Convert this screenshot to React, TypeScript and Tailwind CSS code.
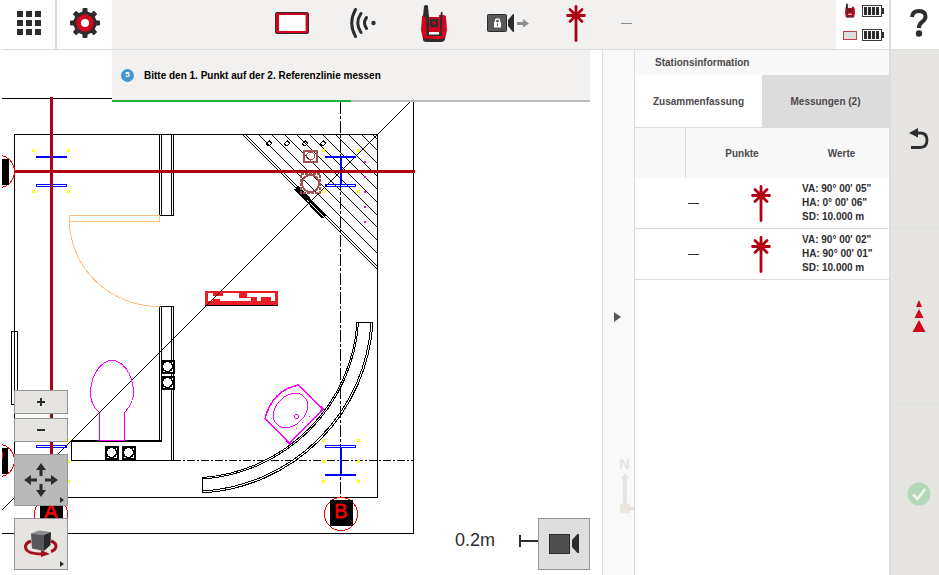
import type { ReactNode } from 'react';

interface Measurement {
  id: number;
  va: string;
  ha: string;
  sd: string;
}

const measurements: Measurement[] = [
  { id: 1, va: `90° 00' 05"`, ha: `0° 00' 06"`, sd: '10.000 m' },
  { id: 2, va: `90° 00' 02"`, ha: `90° 00' 01"`, sd: '10.000 m' },
];

function GridIcon() {
  return (
    <svg width="24" height="24" viewBox="0 0 24 24" fill="#2d2d2f">
      {[0, 9, 18].map((y) => [0, 9, 18].map((x) => <rect key={`${x}-${y}`} x={x} y={y} width="6" height="6" />))}
    </svg>
  );
}

function GearIcon() {
  return (
    <svg width="32" height="32" viewBox="-16 -16 32 32">
      <g fill="#2d2d2f">
        <circle r="11.5" />
        {[0, 45, 90, 135, 180, 225, 270, 315].map((a) => (
          <path key={a} transform={`rotate(${a})`} d="M-4 -9 L-2.5 -12 V-14 Q-2.5 -15 -1.5 -15 H1.5 Q2.5 -15 2.5 -14 V-12 L4 -9 Z" />
        ))}
      </g>
      <circle r="8.8" fill="#d2051e" />
      <circle r="4" fill="#fff" />
    </svg>
  );
}

function TabletIcon() {
  return (
    <svg width="34" height="22" viewBox="0 0 34 22">
      <rect x="0.5" y="0.5" width="33" height="21" rx="1.5" fill="#d2051e" stroke="#2d2d2f" />
      <rect x="4" y="3" width="26" height="16" fill="#fff" />
      <path d="M30.5 3 V19" stroke="#e9a0a8" />
    </svg>
  );
}

function SignalIcon() {
  return (
    <svg width="26" height="30" viewBox="0 0 26 30" fill="none" stroke="#2d2d2f" strokeWidth="3" strokeLinecap="round">
      <path d="M5.5 1.5 Q-2 15 5.5 28.5" />
      <path d="M11 5.5 Q4.5 15 11 24.5" />
      <path d="M16.5 9.5 Q12.5 15 16.5 20.5" />
      <circle cx="23.5" cy="15" r="2.2" fill="#2d2d2f" stroke="none" />
    </svg>
  );
}

function StationIcon({ className = 'h-[37px] w-[26px]' }: { className?: string }) {
  return (
    <svg className={className} viewBox="0 0 26 37">
      <path d="M1 12 Q1 10 4 10 H22 Q25 10 25 12 L26 25 L24 34 Q24 36 21 36 H5 Q2 36 2 34 L0 25 Z" fill="#d2051e" />
      <path d="M2 32 L5 34 H21 L24 32 L23 36 Q22 37 20 37 H6 Q3 37 2.5 36 Z" fill="#2d2d2f" />
      <path d="M3 1 Q5 -1 7 1 L8 13 V29 H19 V13 L20 7 H21.5 V10 L20.5 31 H6 L5 13 L2 11 Z" fill="#2d2d2f" />
      <path d="M8 0 H18 V12 H8 Z" fill="#f3f1ef" />
      <rect x="8" y="12" width="10.5" height="14" fill="#d2051e" />
      <rect x="9" y="14" width="8" height="8" fill="#2d2d2f" />
      <circle cx="13" cy="18" r="1.8" fill="#d2051e" />
      <rect x="8" y="27" width="10" height="2.5" fill="#fff" />
    </svg>
  );
}

function LockedCameraIcon() {
  return (
    <svg width="49" height="20" viewBox="0 0 49 20">
      <rect x="7.5" y="1.5" width="19" height="17" rx="1" fill="#58575a" stroke="#2d2d2f" />
      <path d="M34 1 V19 H33 L28 13 V7 L33 1 Z" fill="#2d2d2f" />
      <rect x="14" y="9" width="7" height="5.5" fill="#fff" />
      <path d="M15.5 9 V7.5 Q15.5 6 17.5 6 Q19.5 6 19.5 7.5 V9" fill="none" stroke="#fff" strokeWidth="1.3" />
      <path d="M17.5 10.5 V13" stroke="#58575a" />
      <path d="M37 9 H43 V6 L49 10.5 L43 14.5 V12 H37 Z" fill="#8f8f8f" />
    </svg>
  );
}

function LaserPointIcon() {
  return (
    <svg width="20" height="37" viewBox="0 0 20 37" fill="none" stroke="#b00014" strokeWidth="2.8" strokeLinecap="round">
      <path d="M10 1.5 V35.5 M1.5 10.5 H18.5 M4 4.5 L16 16.5 M16 4.5 L4 16.5" />
      <circle cx="10" cy="10.5" r="4" fill="#b00014" stroke="none" />
    </svg>
  );
}

function BatteryIcon() {
  return (
    <svg width="22" height="12" viewBox="0 0 22 12">
      <rect x="0.5" y="0.5" width="19" height="11" fill="#fff" stroke="#3c3c3e" />
      <rect x="20" y="3" width="2" height="6" fill="#2d2d2f" />
      {[2, 6, 10, 14].map((x) => (
        <rect key={x} x={x} y="2" width="3" height="8" fill="#2d2d2f" />
      ))}
    </svg>
  );
}

function HelpIcon() {
  return (
    <svg width="18" height="28" viewBox="0 0 18 28">
      <path d="M2 8 Q2.5 2 9 2 Q15.5 2 15.5 7.5 Q15.5 10.5 12 13 Q9 15 9 19" fill="none" stroke="#2d2d2f" strokeWidth="4" />
      <circle cx="9" cy="24.5" r="3.2" fill="#2d2d2f" />
    </svg>
  );
}

function CameraIcon() {
  return (
    <svg width="30" height="20" viewBox="0 0 30 20">
      <rect x="0.5" y="0.5" width="20" height="19" fill="#504e50" stroke="#2d2d2f" />
      <path d="M30 0 V19 H28.5 L23 13 V6 L28.500 0 Z" fill="#2d2d2f" />
    </svg>
  );
}

function MoveIcon() {
  return (
    <svg width="34" height="34" viewBox="-17 -17 34 34" fill="#2d2d2f">
      {[0, 90, 180, 270].map((a) => (
        <path key={a} transform={`rotate(${a})`} d="M0 -17 L5 -10 H1.5 V-4 H-1.5 V-10 H-5 Z" />
      ))}
    </svg>
  );
}

function RotateIcon() {
  return (
    <svg width="34" height="28" viewBox="0 0 34 28">
      <path d="M7 11 Q1.5 13 1.5 17 Q2 24 18 24" fill="none" stroke="#a50f1e" strokeWidth="3" />
      <path d="M27 11 Q32 13 32 16 Q32 20 27 21.5" fill="none" stroke="#a50f1e" strokeWidth="3" />
      <path d="M17 20 L26 24 L17 27 Z" fill="#a50f1e" />
      <path d="M7 3.5 L15 0.5 L27 2 L20 5 Z" fill="#8c8c90" />
      <path d="M7 3.5 L20 5 V21 L8 18.5 Z" fill="#58575a" />
      <path d="M20 5 L27 2 L26.5 15 L20 21 Z" fill="#29292b" />
    </svg>
  );
}

function Dots({ points, color }: { points: number[][]; color: string }) {
  return (
    <g fill="none" stroke={color}>
      {points.map(([x, y]) => (
        <rect key={`${x}-${y}`} x={x - 0.5} y={y - 0.5} width="2" height="2" />
      ))}
    </g>
  );
}

function Socket({ x, y }: { x: number; y: number }) {
  return (
    <g transform={`translate(${x} ${y})`}>
      <rect x="0.5" y="0.5" width="12" height="12" fill="#fff" stroke="#000" strokeWidth="2" />
      <circle cx="6.5" cy="6.5" r="5" fill="#fff" stroke="#000" strokeWidth="1.5" />
    </g>
  );
}

function FloorPlan() {
  return (
    <svg
      className="absolute top-0 left-[2px]"
      width="413"
      height="525"
      viewBox="2 50 413 525"
      shapeRendering="crispEdges"
      fill="none"
      stroke="#000"
      strokeWidth="1"
      role="img"
      aria-label="Grundriss"
    >
      {/* walls */}
      <path d="M2 98.5 H413.5 V533.5 H2 M14.5 134.5 H377.5 V497.5 H14.5 Z" />
      <rect x="11.5" y="331.5" width="6" height="73" />
      <path d="M159.5 134 V215.5 H173.5 V134 M161.5 134 V215 M171.5 134 V215" />
      <path d="M159.5 441 V306.5 H173.5 V460.5 M161.5 306 V441 M171.5 306 V460" />
      <path d="M71 441 H161.5" strokeWidth="2" />
      <path d="M71.5 441 V460.5 H173" />
      <path d="M173 460.5 H413" strokeDasharray="8 2 2 2" />
      <path d="M340.5 102 V497" strokeDasharray="12 2 3 2" />
      <path d="M410 102 L2 510" />

      {/* hatched corner */}
      <path d="M243 135 L377 269 M246 135 L377 266" />
      {[259, 272, 285, 297, 310, 323, 336, 349, 362, 373].map((x) => (
        <line key={x} x1={x} y1="135" x2="377" y2={512 - x} />
      ))}
      <path d="M297 187 L309 199" strokeWidth="4" />
      <path d="M309 199 L325 216" strokeWidth="2" />
      <path d="M295 189 L323 218" strokeWidth="2" />
      {[269, 287, 305, 323].map((x) => (
        <path key={x} d={`M${x - 3} 144 L${x} 141 L${x + 3} 143 L${x} 146 Z M${x} 140 V142`} />
      ))}
      <g stroke="#a0524e">
        <rect x="304" y="151" width="13" height="11" strokeWidth="2" />
        <circle cx="310.5" cy="156" r="4" />
        <rect x="301" y="174" width="19" height="19" strokeWidth="2" strokeDasharray="3 1" />
        <circle cx="310.5" cy="183.5" r="8.5" strokeWidth="2" />
      </g>

      {/* door */}
      <g stroke="#ffbf7f">
        <rect x="69.5" y="215.5" width="90" height="6" />
        <path d="M69.5 221 A90 86 0 0 0 160 306.5" />
      </g>

      {/* sanitary objects */}
      <g stroke="#f0f">
        <path d="M99.5 412.5 V440.5 H124.5 V412.5 C131 406 134 400 133.5 390 C132 372 122 360.5 112 360.5 C101 360.5 92 374 90.5 390 C90 400 94 408 99.5 412.5" />
        <path d="M265 418.5 Q272.5 390 298.5 385 L323 409 L289.5 443.5 Z" strokeWidth="1.5" />
        <ellipse cx="290.5" cy="410.5" rx="19.5" ry="14.5" transform="rotate(-45 290.5 410.5)" />
        <circle cx="296.5" cy="416.5" r="2" />
        <path d="M302 422.5 H303 M309 416.5 H310 M296 428.5 H297" />
      </g>
      <Socket x={161} y={360} />
      <Socket x={161} y={376} />
      <Socket x={105} y={446} />
      <Socket x={122} y={446} />

      {/* curved wall */}
      <path d="M357 322.5 H373 A182 182 0 0 1 202.5 493 V477.5 A167 167 0 0 0 357 322.5" />
      <path d="M371 323 A180 180 0 0 1 203 491 M358.5 323 A168 168 0 0 1 203 479" />

      {/* columns */}
      <g stroke="#00f">
        <path d="M36 157 H67 M325 157 H356 M341 157 V184 M341 448 V475 M325 475 H356" strokeWidth="2" />
        <rect x="36.5" y="184.5" width="30" height="2" />
        <rect x="325.5" y="184.5" width="30" height="2" />
        <rect x="36.5" y="445.5" width="30" height="2" />
        <rect x="325.5" y="445.5" width="30" height="2" />
      </g>
      <Dots
        color="#ff0"
        points={[
          [33, 150], [68, 150], [33, 191], [68, 191], [323, 150], [358, 150], [323, 191], [358, 191],
          [323, 440], [358, 440], [323, 461], [358, 461], [323, 481], [358, 481], [68, 440], [68, 461], [68, 481],
        ]}
      />
      {[162, 177, 192, 207, 222].map((y) => (
        <rect key={y} x="364" y={y - 1} width="2" height="2" fill="#f0f" stroke="none" />
      ))}

      {/* axis heads */}
      <g stroke="#f00">
        <circle cx="-2" cy="171.5" r="16.5" />
        <circle cx="-2" cy="460.5" r="16.5" />
        <circle cx="51" cy="514" r="16.5" />
        <circle cx="341" cy="514" r="16.5" />
      </g>
      <g fill="#000" stroke="none">
        <rect x="2" y="159" width="7" height="26" />
        <rect x="2" y="448" width="6" height="26" />
        <rect x="40" y="500" width="23" height="26" />
        <rect x="330" y="500" width="23" height="26" />
      </g>
      <path d="M2.5 452 V459" stroke="#f00" />
      <g className="font-['Liberation_Sans'] text-[20px]" fill="#f00" stroke="#f00" strokeWidth="0.5" textAnchor="middle">
        <text x="51" y="518">A</text>
        <text x="341" y="518">B</text>
      </g>

      {/* manufacturer mark */}
      <rect x="205" y="291" width="73" height="14" fill="#ed1c24" stroke="none" />
      <path d="M205 305.5 H278" />
      <g fill="#fff" stroke="none">
        <rect x="208" y="293" width="5" height="8" />
        <rect x="213" y="296" width="10" height="3" />
        <rect x="223" y="293" width="16" height="5" />
        <rect x="220" y="298" width="31" height="3" />
        <rect x="247" y="293" width="28" height="4" />
        <rect x="257" y="297" width="4" height="4" />
        <rect x="271" y="297" width="4" height="4" />
      </g>
      <path d="M222 290 L205 307" />

      {/* reference lines */}
      <path d="M14 171.5 H415 M51.5 97 V470" stroke="#b00014" strokeWidth="3" />
    </svg>
  );
}

function ToolButton({ label, className, menu, children }: { label: string; className: string; menu?: boolean; children: ReactNode }) {
  return (
    <button aria-label={label} className={`relative flex w-[54px] items-center justify-center border border-[#969696] ${className}`}>
      {children}
      {menu && (
        <svg className="absolute right-[3px] bottom-[2px]" width="4" height="6" viewBox="0 0 4 6">
          <path d="M0 0 L4 3 L0 6 Z" fill="#2d2d2f" />
        </svg>
      )}
    </button>
  );
}

function Header() {
  return (
    <header className="ml-[2px] flex h-[50px] shrink-0 border-b border-[#dcdcdc]">
      <button aria-label="Menü" className="flex w-[55px] items-center justify-center border-r-2 border-[#dcdcdc] pb-[3px]">
        <GridIcon />
      </button>
      <button aria-label="Einstellungen" className="flex w-[55px] items-center justify-center pb-[3px]">
        <GearIcon />
      </button>
      <div className="flex flex-1 items-center bg-[#f3f1ef] pb-[3px] pl-[144px]">
        <div className="flex w-[71px] justify-center"><TabletIcon /></div>
        <div className="flex w-[71px] justify-center"><SignalIcon /></div>
        <div className="flex w-[71px] justify-center"><StationIcon /></div>
        <div className="flex w-[71px] justify-center"><LockedCameraIcon /></div>
        <div className="flex w-[71px] justify-center"><LaserPointIcon /></div>
        <div className="flex w-[30px] justify-center"><span className="h-px w-[11px] bg-[#8a8a8a]" /></div>
      </div>
      <div className="grid w-[53px] grid-cols-[16px_22px] content-start items-center justify-center justify-items-center gap-x-1 gap-y-[11px] pt-[3px]">
        <StationIcon className="h-[15px] w-[10px]" />
        <BatteryIcon />
        <svg width="14" height="9" viewBox="0 0 14 9">
          <rect x="0.5" y="0.5" width="13" height="8" fill="#ddd" stroke="#c83c4b" />
        </svg>
        <BatteryIcon />
      </div>
      <button aria-label="Hilfe" className="flex w-[50px] items-center justify-center border-l-2 border-[#dcdcdc] pb-[3px] pl-2">
        <HelpIcon />
      </button>
    </header>
  );
}

function Canvas() {
  return (
    <main className="relative min-w-0 flex-1 overflow-hidden bg-white">
      <FloorPlan />

      <div className="absolute top-0 right-3 left-28 bg-[#f3f1ef]">
        <div className="flex h-[50px] items-center gap-2.5 pl-[9px]">
          <span className="flex size-[13px] items-center justify-center rounded-full bg-[#4398cf] text-[8px] font-bold text-white">5</span>
          <p className="font-bold text-black">Bitte den 1. Punkt auf der 2. Referenzlinie messen</p>
        </div>
        <div className="h-[2px] bg-[#bababa]">
          <div className="h-full w-1/2 bg-[#1bb13c]" />
        </div>
      </div>

      <div className="absolute bottom-[5px] left-[14px] flex flex-col gap-3">
        <div className="flex flex-col gap-1">
          <ToolButton label="Vergrößern" className="h-6 bg-[#e6e4e0]">
            <svg width="8" height="8" viewBox="0 0 8 8"><path d="M0 4 H8 M4 0 V8" stroke="#2d2d2f" strokeWidth="2" /></svg>
          </ToolButton>
          <ToolButton label="Verkleinern" className="h-6 bg-[#e6e4e0]">
            <svg width="8" height="8" viewBox="0 0 8 8"><path d="M0 4 H8" stroke="#2d2d2f" strokeWidth="2" /></svg>
          </ToolButton>
        </div>
        <ToolButton label="Verschieben" className="h-[52px] bg-[#b9b9b9]" menu>
          <MoveIcon />
        </ToolButton>
        <ToolButton label="Drehen" className="h-[52px] bg-[#e6e4e0]" menu>
          <RotateIcon />
        </ToolButton>
      </div>

      <div className="absolute right-3 bottom-[5px] flex items-center">
        <span className="mr-6 pb-2 text-[18px] leading-none text-[#2d2d2f]">0.2m</span>
        <svg className="mb-[7px]" width="19" height="12" viewBox="0 0 19 12" shapeRendering="crispEdges">
          <path d="M1 0 V12 M1 6 H19" stroke="#2d2d2f" strokeWidth="2" />
        </svg>
        <button aria-label="Kamera" className="flex size-[52px] items-center justify-center border border-[#969696] bg-[#dedede]">
          <CameraIcon />
        </button>
      </div>
    </main>
  );
}

function Splitter() {
  return (
    <div className="relative flex w-[33px] shrink-0 items-center justify-center border-x border-[#dcdcdc] bg-[#f9f9f9]">
      <button aria-label="Seitenleiste einklappen" className="mt-[9px] -ml-[2px]">
        <svg width="7" height="10" viewBox="0 0 7 10"><path d="M0 0 L7 5 L0 10 Z" fill="#5a5a5c" /></svg>
      </button>
      <div className="absolute right-0 bottom-[60px] flex w-[15px] flex-col items-start text-[#e3e4ec]">
        <span className="text-[15px] leading-[19px] font-bold">N</span>
        <svg width="15" height="42" viewBox="0 0 15 42">
          <path d="M6 0 L10 6 H8 V31 H4 V6 H2 Z" fill="#e3e4ec" />
          <path d="M1 30 L3 31 H9 L11 30 V41 L9 40 H3 L1 41 Z" fill="#ebe6de" />
          <path d="M11 35.5 H15" stroke="#f0d9dc" strokeWidth="3" />
        </svg>
      </div>
    </div>
  );
}

function StationPanel() {
  return (
    <aside className="w-[254px] shrink-0 bg-white text-[#4c4a4c]">
      <h2 className="bg-[#f8f8f8] pl-5 leading-[25px] font-bold">Stationsinformation</h2>
      <div className="flex h-[53px] border-b border-[#dcdcdc]" role="tablist">
        <button role="tab" aria-selected="false" className="flex-1 font-bold">Zusammenfassung</button>
        <button role="tab" aria-selected="true" className="flex-1 bg-[#dcdcdc] font-bold">Messungen (2)</button>
      </div>
      <table className="w-full table-fixed border-separate border-spacing-0 text-left">
        <thead className="bg-[#f8f8f8]">
          <tr className="h-[50px]">
            <td className="w-[51px] border-r border-[#dcdcdc]" />
            <th className="w-[112px] p-0 text-center">Punkte</th>
            <th className="p-0 pr-1 text-center">Werte</th>
          </tr>
        </thead>
        <tbody className="text-[#2d2d2f]">
          {measurements.map((m) => (
            <tr key={m.id} className="h-[51px]">
              <td className="border-b border-[#dcdcdc]" />
              <td className="border-b border-[#dcdcdc] p-0">
                <div className="flex items-center gap-[52px] pl-0.5">
                  <span className="h-px w-[11px] bg-[#2d2d2f]" />
                  <LaserPointIcon />
                </div>
              </td>
              <td className="border-b border-[#dcdcdc] p-0 pl-1 leading-[14px] font-bold">
                <div>VA: {m.va}</div>
                <div>HA: {m.ha}</div>
                <div>SD: {m.sd}</div>
              </td>
            </tr>
          ))}
        </tbody>
      </table>
    </aside>
  );
}

function ActionBar() {
  return (
    <nav className="w-[50px] shrink-0 border-l-2 border-[#dcdcdc] bg-[#e6e4e0]">
      <button aria-label="Zurück" className="flex h-[178px] w-full items-center justify-center border-b border-[#dedede] pl-2">
        <svg width="20" height="22" viewBox="0 0 20 22">
          <path d="M7 5 H11 Q18 5 18 12 Q18 19.5 11 19.5 H2" fill="none" stroke="#2d2d2f" strokeWidth="2.8" />
          <path d="M0 5 L9 0 V9.5 Z" fill="#2d2d2f" />
        </svg>
      </button>
      <button aria-label="Messen" className="flex h-[177px] w-full items-center justify-center border-b border-[#dedede] pl-2">
        <svg width="14" height="32" viewBox="0 0 14 32" fill="#d2051e">
          <path d="M7 0 L10 7 H4 Z M7 9 L11.5 18 H2.5 Z M7 20 L13.5 32 H0.5 Z" />
        </svg>
      </button>
      <button aria-label="Bestätigen" className="flex h-[177px] w-full items-center justify-center pl-2">
        <svg width="24" height="24" viewBox="0 0 24 24">
          <circle cx="12" cy="12" r="11.5" fill="#b4d7b8" />
          <path d="M6 12.5 L10.5 17 L18 7" fill="none" stroke="#f3f4ef" strokeWidth="2.5" />
        </svg>
      </button>
    </nav>
  );
}

export default function App() {
  return (
    <div className="flex h-screen flex-col overflow-hidden bg-white font-['Liberation_Sans',sans-serif] text-[10px]">
      <Header />
      <div className="flex min-h-0 flex-1">
        <Canvas />
        <Splitter />
        <StationPanel />
        <ActionBar />
      </div>
    </div>
  );
}
